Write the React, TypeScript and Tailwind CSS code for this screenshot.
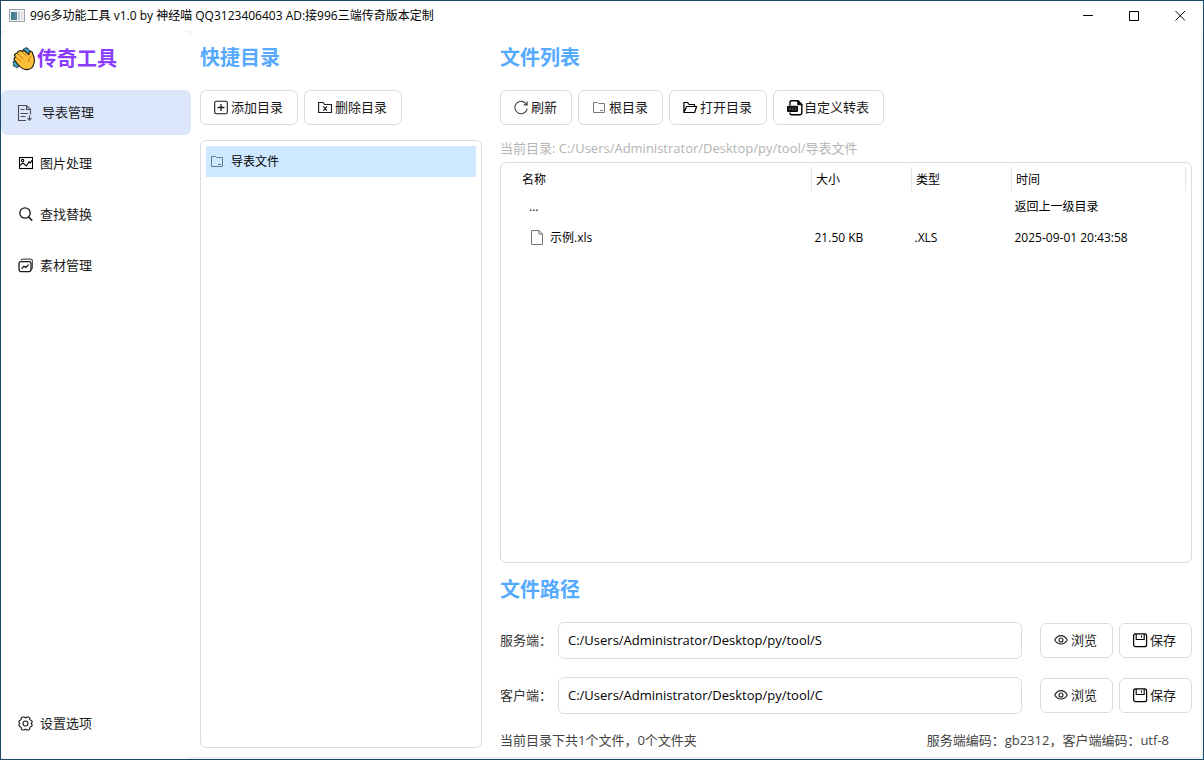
import React, { useState } from "react"
import clsx from "clsx"

interface IconProps {
  children: React.ReactNode
  size?: number
  stroke?: string
}

const Icon: React.FC<IconProps> = ({ children, size = 16, stroke = "#1a1a1a" }) => (
  <svg
    className="shrink-0"
    width={size}
    height={size}
    viewBox={`0 0 ${size} ${size}`}
    fill="none"
    stroke={stroke}
    strokeWidth="1.1"
    aria-hidden="true"
  >
    {children}
  </svg>
)

const LogoIcon = () => (
  <svg className="shrink-0" width="24" height="24" viewBox="0 0 24 24" aria-hidden="true">
    <path d="M10.5 3.6 L12.8 .8 C15 .5 17.8 2 18.6 4.8 L17 8 Z" fill="#3f9dbd" stroke="#161616" strokeWidth="1" strokeDasharray="3 1.5" />
    <path d="M2.2 13.4 C.2 15.5 .8 20 4.6 20.8 L8 18.6 L4 13 Z" fill="#3f9dbd" stroke="#161616" strokeWidth="1" strokeDasharray="3 1.5" />
    <path
      d="M2 11.5 L3.4 10 L2.4 8 L4 6.4 L5.6 6.2 L6 4.4 L8.2 3.6 L10 4.4 L12 3.4 L16.8 7.6 L17.4 5.2 C18.2 4 20 4.4 20.5 5.8 L22.2 11 C23.4 17 20.5 22.3 15 22.6 C10.5 22.8 8 20 5.5 17 L2.6 13.4 Z"
      fill="#fcbf3a"
      stroke="#161616"
      strokeWidth="1.1"
      strokeLinejoin="round"
    />
    <path d="M3.6 10 L9.2 14.4 M5.4 6.4 L11.5 12 M9.8 4.6 L14.4 9.2 M19 9 C16.6 11 16.4 13 17.2 15" fill="none" stroke="#b97a1c" strokeWidth="1" />
  </svg>
)

const WindowIcon = () => (
  <svg className="shrink-0" width="16" height="14" viewBox="0 0 16 14" aria-hidden="true">
    <rect x=".5" y=".5" width="15" height="12" fill="#eef1f3" stroke="#9aa3a8" />
    <rect x="2" y="3" width="6" height="8" fill="#3d7f86" />
    <rect x="5" y="3" width="3" height="8" fill="#5a86a0" />
    <rect x="9" y="3" width="2" height="8" fill="#c9cfd3" />
    <rect x="12" y="3" width="2" height="8" fill="#dfe3e6" />
  </svg>
)

const SheetIcon = () => (
  <Icon size={18} stroke="#4a4d55">
    <path d="M9 16.5 H1.5 V1.5 H9.5 L13.5 5.5 V10.5 M9.5 1.5 V5.5 H13.5 M3.5 5.5 H7.5 M3.5 9.5 H11 M3.5 12.5 H8.5 M12.5 11.5 V16 M10.5 14.2 L12.5 16.2 L14.5 14.2" />
  </Icon>
)

const ImageIcon = () => (
  <Icon stroke="#000">
    <rect x="2.5" y="1.5" width="13" height="11" />
    <circle cx="5.6" cy="4.6" r="1.2" />
    <path d="M3 9.2 L6 7 L9.4 10 L12 5.6 L13.2 7 L15 4.4" />
  </Icon>
)

const SearchIcon = () => (
  <Icon>
    <circle cx="8" cy="6" r="5.2" strokeWidth="1.3" />
    <path d="M11.6 10 L15.2 13.6" strokeWidth="1.5" />
  </Icon>
)

const MaterialIcon = () => (
  <Icon>
    <path d="M4 2.2 C4.6 1.3 5.2 1.1 6 1.1 H13.4 C15 1.1 15.5 1.9 15.5 3.2 V8.4 C15.5 9.8 15 10.8 14 11.3" stroke="#555" strokeWidth="1.4" />
    <rect x="2" y="3.6" width="12" height="10" rx="2" strokeWidth="1.3" />
    <path d="M4.5 10.8 L7 8.4 L9 9.4 L11.5 6.6" strokeWidth="1.3" />
  </Icon>
)

const SettingsIcon = () => (
  <Icon>
    <path d="M5.6 1 H7 L8.5 1.8 L10 1 H11.4 L12.6 1.8 L12.9 3.6 L14.8 4.9 L15.2 6.1 L14.2 7.5 L15.2 8.9 L14.8 10.1 L12.9 11.4 L12.6 13.2 L11.4 14 H10 L8.5 13.2 L7 14 H5.6 L4.4 13.2 L4.1 11.4 L2.2 10.1 L1.8 8.9 L2.8 7.5 L1.8 6.1 L2.2 4.9 L4.1 3.6 L4.4 1.8 Z" />
    <circle cx="8.5" cy="7.5" r="2.5" />
  </Icon>
)

const AddIcon = () => (
  <Icon>
    <rect x=".7" y="1.2" width="12.6" height="12.6" rx="1.5" />
    <path d="M7 4 V11 M3.5 7.5 H10.5" strokeWidth="1.3" />
  </Icon>
)

const DeleteIcon = () => (
  <Icon>
    <path d="M.6 12.5 V2.5 H5 L6.6 4.5 H13.5 V12.5 Z M5.3 6.4 L9 10.6 M9 6.4 L5.3 10.6" />
  </Icon>
)

const RefreshIcon = () => (
  <Icon stroke="#444">
    <path d="M12.6 4.6 A6.2 6.2 0 1 0 13.2 8.6 M13.2 1.5 V4.9 H9.8" />
  </Icon>
)

const FolderIcon = ({ stroke = "#777" }: { stroke?: string }) => (
  <Icon stroke={stroke}>
    <path d="M1.5 12.5 V2.5 H5.5 L6.5 3.5 H12.5 V12.5 Z M8 10.5 H11" strokeWidth="1" />
  </Icon>
)

const OpenFolderIcon = () => (
  <Icon stroke="#000">
    <path d="M.9 12.5 V2.5 H4.6 L6 4.5 H11.5 V6.5 M.9 12.5 L3.6 6.5 H13.6 L11.6 12.5 Z" strokeWidth="1.2" strokeLinejoin="round" />
  </Icon>
)

const ConvertIcon = () => (
  <Icon stroke="#000">
    <path d="M3 5.5 V2.2 Q3 .7 4.7 .7 H11 L14.8 4.5 V13.1 Q14.8 14.8 13.1 14.8 H4.7 Q3 14.8 3 13 V12.5" strokeWidth="1.4" />
    <path d="M10.8 .8 V4.8 H14.8 Z" fill="#000" />
    <rect x=".5" y="6.2" width="10" height="5.3" rx="1" fill="#111" />
    <path d="M2.2 7.6 L4 10 M4 7.6 L2.2 10 M5.4 7.6 V10 H6.8 M9.2 7.8 H7.9 V8.8 H9.2 V10 H7.9" stroke="#666" strokeWidth=".7" />
  </Icon>
)

const EyeIcon = () => (
  <Icon stroke="#222">
    <path d="M.8 7 C3.8 1.2 10.2 1.2 13.2 7 C10.2 12.4 3.8 12.4 .8 7 Z" />
    <circle cx="7" cy="7" r="2" />
  </Icon>
)

const SaveIcon = () => (
  <Icon stroke="#000">
    <rect x=".6" y=".9" width="13" height="12.8" rx="2" strokeWidth="1.2" />
    <path d="M3.2 1 V6.5 H11.2 V1 M8.5 2.5 V4.6" />
  </Icon>
)

const FileIcon = () => (
  <Icon stroke="#70737a">
    <path d="M2.5 .5 H10 L13.5 4 V14.5 H2.5 Z M10 .5 V4 H13.5" strokeWidth="1" />
  </Icon>
)

interface ButtonProps {
  icon: React.ReactNode
  label: string
  className?: string
}

const Button: React.FC<ButtonProps> = ({ icon, label, className }) => (
  <button
    type="button"
    className={clsx(
      "flex h-[35px] shrink-0 items-center gap-px rounded-md border border-[#dcdcdf] bg-white pr-3.5 pl-[13px] text-[13px] text-[#1a1a1a] hover:bg-gray-50",
      className
    )}
  >
    {icon}
    {label}
  </button>
)

const Heading = ({ text }: { text: string }) => (
  <h2 className="text-xl leading-7 font-bold text-[#55aaff]">{text}</h2>
)

interface NavItemProps {
  icon: React.ReactNode
  label: string
  active: boolean
  onClick: () => void
}

const NavItem: React.FC<NavItemProps> = ({ icon, label, active, onClick }) => (
  <button
    type="button"
    onClick={onClick}
    className={clsx(
      "flex h-[45px] w-full items-center gap-[7px] rounded-md pl-4 text-[13px] text-[#1a1a1a]",
      active && "bg-[#dbe6fa]"
    )}
  >
    {icon}
    {label}
  </button>
)

interface PathRowProps {
  id: string
  label: string
  value: string
}

const PathRow: React.FC<PathRowProps> = ({ id, label, value }) => {
  const [path, setPath] = useState<string>(value)
  return (
    <div className="flex items-center">
      <label htmlFor={id} className="w-[58px] shrink-0 text-[13px] text-[#333]">{label}</label>
      <input
        id={id}
        type="text"
        value={path}
        onChange={(e) => setPath(e.target.value)}
        className="h-[37px] min-w-0 flex-1 rounded-md border border-[#dcdcdf] px-[9px] pb-0.5 text-[13px] text-black outline-none"
      />
      <div className="ml-[18px] flex gap-1.5">
        <Button icon={<EyeIcon />} label="浏览" className="w-[73px]" />
        <Button icon={<SaveIcon />} label="保存" className="w-[73px]" />
      </div>
    </div>
  )
}

const navItems = [
  { label: "导表管理", icon: <SheetIcon /> },
  { label: "图片处理", icon: <ImageIcon /> },
  { label: "查找替换", icon: <SearchIcon /> },
  { label: "素材管理", icon: <MaterialIcon /> },
]

const App: React.FC = () => {
  const [current, setCurrent] = useState<string>("导表管理")

  return (
    <div className="flex h-screen flex-col border border-[#1b4a6b] bg-[#f0f0f0] font-['Open_Sans','Noto_Sans_CJK_SC',sans-serif]">
      <header className="flex h-[30px] shrink-0 items-center justify-between bg-white pl-2">
        <div className="flex items-center gap-[5px] text-xs text-black">
          <WindowIcon />
          <h1>996多功能工具 v1.0 by 神经喵 QQ3123406403 AD:接996三端传奇版本定制</h1>
        </div>
        <div className="flex">
          <button type="button" aria-label="最小化" className="flex h-[30px] w-[46px] items-center justify-center">
            <svg width="11" height="11" viewBox="0 0 11 11"><path d="M0 4.5 H10" stroke="#000" /></svg>
          </button>
          <button type="button" aria-label="最大化" className="flex h-[30px] w-[46px] items-center justify-center">
            <svg width="11" height="11" viewBox="0 0 11 11"><path d="M.5 .5 H9.5 V9.5 H.5 Z" stroke="#000" fill="none" /></svg>
          </button>
          <button type="button" aria-label="关闭" className="flex h-[30px] w-[46px] items-center justify-center">
            <svg width="11" height="11" viewBox="0 0 11 11"><path d="M.5 0 L10 9.5 M10 0 L.5 9.5" stroke="#000" /></svg>
          </button>
        </div>
      </header>

      <div className="flex min-h-0 flex-1">
        <aside className="flex w-[190px] shrink-0 flex-col rounded-md bg-white pb-[13px]">
          <div className="flex h-[59px] items-center gap-px pb-1 pl-[11px]">
            <LogoIcon />
            <span className="text-xl leading-7 font-bold text-[#8b3dff]">传奇工具</span>
          </div>
          <nav className="flex flex-1 flex-col gap-1.5">
            {navItems.map((item) => (
              <NavItem
                key={item.label}
                icon={item.icon}
                label={item.label}
                active={current === item.label}
                onClick={() => setCurrent(item.label)}
              />
            ))}
            <div className="mt-auto">
              <NavItem
                icon={<SettingsIcon />}
                label="设置选项"
                active={current === "设置选项"}
                onClick={() => setCurrent("设置选项")}
              />
            </div>
          </nav>
        </aside>

        <main className="mr-0.5 mb-0.5 flex min-w-0 flex-1 gap-[18px] bg-white pt-[13px] pr-[9px] pb-[7px] pl-[9px]">
          <section className="flex w-[282px] shrink-0 flex-col pb-0.5">
            <Heading text="快捷目录" />
            <div className="mt-[18px] flex gap-1.5">
              <Button icon={<AddIcon />} label="添加目录" />
              <Button icon={<DeleteIcon />} label="删除目录" />
            </div>
            <ul className="mt-[15px] flex-1 rounded-md border border-[#dcdcdf] p-[5px]">
              <li className="flex h-[31px] items-center gap-[5px] bg-[#cde8ff] pl-1 text-xs text-black">
                <FolderIcon stroke="#5d7f9c" />
                导表文件
              </li>
            </ul>
          </section>

          <section className="flex min-w-0 flex-1 flex-col">
            <Heading text="文件列表" />
            <div className="mt-[18px] flex gap-1.5">
              <Button icon={<RefreshIcon />} label="刷新" />
              <Button icon={<FolderIcon />} label="根目录" />
              <Button icon={<OpenFolderIcon />} label="打开目录" />
              <Button icon={<ConvertIcon />} label="自定义转表" />
            </div>
            <p className="mt-[13px] text-[13px] leading-5 text-[#b4b4b4]">
              当前目录: C:/Users/Administrator/Desktop/py/tool/导表文件
            </p>
            <div className="mt-1 flex-1 rounded-md border border-[#dcdcdf] px-[5px] py-1">
              <table className="w-full table-fixed text-left text-xs text-black">
                <thead>
                  <tr className="h-6">
                    <th className="border-r border-[#e5e5e5] p-0 pt-0.5 pl-4 font-normal">名称</th>
                    <th className="w-[100px] border-r border-[#e5e5e5] p-0 pt-0.5 pl-1 font-normal">大小</th>
                    <th className="w-[100px] border-r border-[#e5e5e5] p-0 pt-0.5 pl-1 font-normal">类型</th>
                    <th className="w-[174px] border-r border-[#e5e5e5] p-0 pt-0.5 pl-1 font-normal">时间</th>
                  </tr>
                </thead>
                <tbody>
                  <tr className="h-[31px]">
                    <td className="p-0 pl-[23px]">...</td>
                    <td className="p-0 pl-[3px]"></td>
                    <td className="p-0 pl-[3px]"></td>
                    <td className="p-0 pl-[3px]">返回上一级目录</td>
                  </tr>
                  <tr className="h-[31px]">
                    <td className="p-0 pl-[23px]">
                      <div className="flex items-center gap-[5px]">
                        <FileIcon />
                        示例.xls
                      </div>
                    </td>
                    <td className="p-0 pl-[3px]">21.50 KB</td>
                    <td className="p-0 pl-[3px]">.XLS</td>
                    <td className="p-0 pl-[3px]">2025-09-01 20:43:58</td>
                  </tr>
                </tbody>
              </table>
            </div>

            <div className="mt-[13px]">
              <Heading text="文件路径" />
            </div>
            <div className="mt-[18px] flex flex-col gap-[18px]">
              <PathRow id="server-path" label="服务端：" value="C:/Users/Administrator/Desktop/py/tool/S" />
              <PathRow id="client-path" label="客户端：" value="C:/Users/Administrator/Desktop/py/tool/C" />
            </div>
            <footer className="mt-4 flex justify-between pr-[23px] text-[13px] leading-5 text-[#444]">
              <p>当前目录下共1个文件，0个文件夹</p>
              <p>服务端编码：gb2312，客户端编码：utf-8</p>
            </footer>
          </section>
        </main>
      </div>
    </div>
  )
}

export default App
